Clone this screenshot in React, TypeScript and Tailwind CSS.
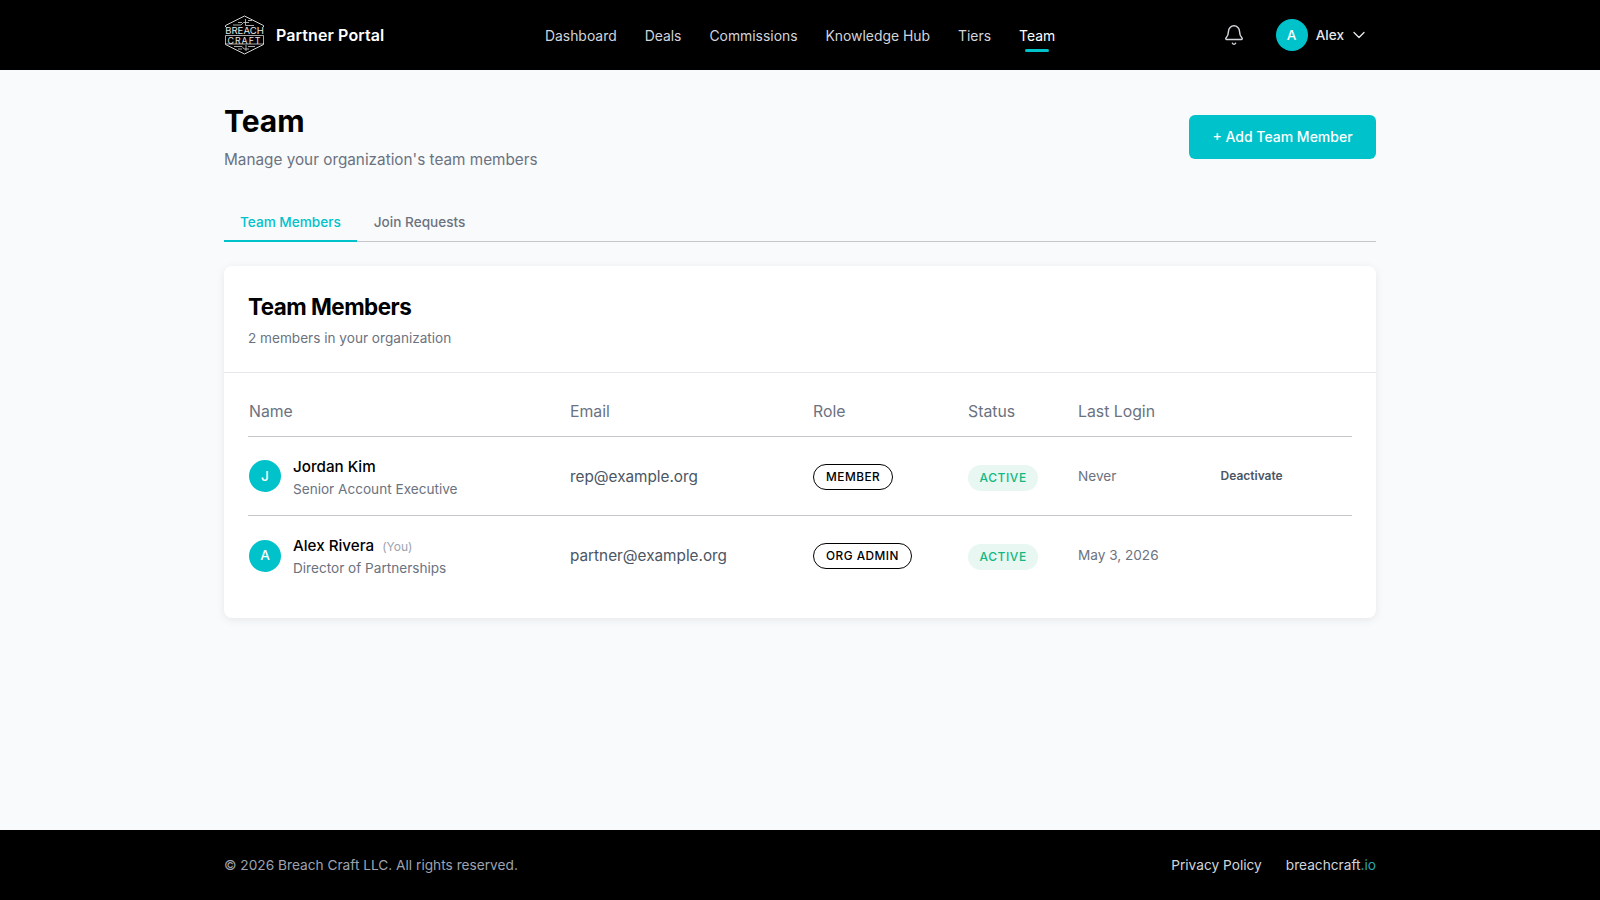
import { Bell, ChevronDown } from "lucide-react";

const nav = ["Dashboard", "Deals", "Commissions", "Knowledge Hub", "Tiers", "Team"];
const cols = "grid grid-cols-[322px_243px_155px_110px_142.5px_1fr]";

function Logo() {
  return (
    <div className="relative h-[40px] w-[41px] shrink-0">
      <svg viewBox="0 0 41 40" className="absolute inset-0 h-full w-full" fill="none" stroke="#d4d4d4" strokeWidth="1">
        <path d="M1.5 12 V10.5 L20.5 1 L39.5 10.5 V12" />
        <path d="M1.5 28 V29.5 L20.5 39 L39.5 29.5 V28" />
        <path d="M9 10 H17 L19.5 7.5 H25 M14 7.5 H18 M21.5 4 V10.5 H30 M24 5.5 H28" strokeWidth="0.8" />
        <path d="M10 31.5 H18 L20 34 H25 M14 34 H18 M22 30 V36 M24 31.5 H31" strokeWidth="0.8" />
        <path d="M1.5 20.5 H39.5 V29 H1.5 Z" strokeWidth="0.8" />
      </svg>
      <div className="absolute left-0 top-[11px] w-full text-center text-[9.6px] font-normal leading-[9px] text-[#e5e5e5]">BREACH</div>
      <div className="absolute left-0 top-[20.5px] w-full text-center text-[8.8px] font-normal leading-[9px] tracking-[1px] text-[#e5e5e5]">CRAFT</div>
    </div>
  );
}

function Avatar({ l }: { l: string }) {
  return (
    <div className="flex h-8 w-8 shrink-0 items-center justify-center rounded-full bg-[#00c2cb] text-[13.6px] font-medium text-white">{l}</div>
  );
}

function Active() {
  return (
    <span className="relative top-px inline-block rounded-full bg-[#e8f7f2] px-[11.5px] py-[5px] text-xs font-medium leading-4 tracking-[0.6px] text-[#10b981]">ACTIVE</span>
  );
}

function Role({ t }: { t: string }) {
  return (
    <span className="inline-block rounded-full border border-black bg-white px-3 py-1 text-[11.8px] font-medium leading-4 tracking-[0.5px] text-black">{t}</span>
  );
}

function Row({ l, name, you, title, email, role, login, action, last }: { l: string; name: string; you?: boolean; title: string; email: string; role: string; login: string; action?: boolean; last?: boolean }) {
  return (
    <div className={`${cols} h-[79px] items-center ${last ? "" : "border-b border-[#c4c6ca]"}`}>
      <div className="flex items-center gap-3 pl-px">
        <Avatar l={l} />
        <div>
          <div className="flex items-baseline pt-px leading-6 text-black">
            <span className="text-[15.2px] font-medium">{name}</span>
            {you && <span className="ml-2 text-xs text-[#9ca3af]">(You)</span>}
          </div>
          <div className="text-[13.6px] leading-5 text-[#6b7280]">{title}</div>
        </div>
      </div>
      <div className="pt-0.5 text-[15.3px] text-[#4b5563]">{email}</div>
      <div><Role t={role} /></div>
      <div><Active /></div>
      <div className="text-[13.6px] text-[#6b7280]">{login}</div>
      <div className="text-xs font-semibold text-[#4b5563]">{action ? "Deactivate" : ""}</div>
    </div>
  );
}

export default function App() {
  return (
    <div className="flex min-h-[900px] flex-col bg-[#f9fafc] font-['Inter',sans-serif]">
      <header className="h-[70px] bg-black">
        <div className="mx-auto flex h-full w-[1152px] items-center">
          <div className="flex w-[321px] items-center gap-[11px]">
            <Logo />
            <span className="text-base font-semibold tracking-[0.1px] text-white">Partner Portal</span>
          </div>
          <nav className="flex gap-7 pt-0.5">
            {nav.map((n) => (
              <span key={n} className={`relative text-[13.9px] font-normal ${n === "Team" ? "text-white" : "text-[#d1d5db]"}`}>
                {n}
                {n === "Team" && <span className="absolute -bottom-[6px] left-1/2 h-[3px] w-6 -translate-x-1/2 rounded-full bg-[#00c2cb]" />}
              </span>
            ))}
          </nav>
          <div className="ml-auto flex items-center pr-[7px]">
            <Bell className="mr-[31px] h-[22px] w-[22px] text-[#d1d5db]" strokeWidth={1.6} />
            <Avatar l="A" />
            <span className="ml-2 text-[13.6px] font-medium text-[#e5e7eb]">Alex</span>
            <ChevronDown className="ml-[5px] h-5 w-5 text-[#e5e7eb]" strokeWidth={1.6} />
          </div>
        </div>
      </header>
      <main className="mx-auto w-[1152px] flex-1 pt-8">
        <div className="flex items-start justify-between">
          <div>
            <h1 className="text-3xl font-bold leading-[38px] text-black">Team</h1>
            <p className="mt-2 text-[15.3px] leading-6 text-[#6b7280]">Manage your organization's team members</p>
          </div>
          <button className="mt-[13px] h-11 w-[187px] rounded-md bg-[#00c2cb] text-sm font-medium text-white">+ Add Team Member</button>
        </div>
        <div className="mt-[29px] flex border-b border-[#c4c6ca]">
          <div className="-mb-px border-b-2 border-[#00c2cb] px-4 pb-2 pt-[11px] text-[13.6px] font-medium leading-5 text-[#00c2cb]">Team Members</div>
          <div className="ml-px px-4 pb-2 pt-[11px] text-[13.6px] font-medium leading-5 text-[#6b7280]">Join Requests</div>
        </div>
        <div className="mt-6 rounded-lg bg-white shadow-[0_2px_8px_rgba(0,0,0,0.08)]">
          <div className="border-b border-[#e5e7eb] px-6 pb-6 pt-[25px]">
            <h2 className="text-[22.4px] font-bold leading-8 tracking-[-0.5px] text-black">Team Members</h2>
            <p className="mt-[5px] text-[13.6px] leading-5 text-[#6b7280]">2 members in your organization</p>
          </div>
          <div className="px-6 pb-[23px]">
            <div className={`${cols} h-[64px] items-center border-b border-[#c4c6ca] pt-[15px] text-[15.8px] font-normal text-[#6b7280]`}>
              <div className="pl-px">Name</div>
              <div>Email</div>
              <div>Role</div>
              <div>Status</div>
              <div>Last Login</div>
              <div />
            </div>
            <Row l="J" name="Jordan Kim" title="Senior Account Executive" email="rep@example.org" role="MEMBER" login="Never" action />
            <Row l="A" name="Alex Rivera" you title="Director of Partnerships" email="partner@example.org" role="ORG ADMIN" login="May 3, 2026" last />
          </div>
        </div>
      </main>
      <footer className="h-[70px] bg-black">
        <div className="mx-auto flex h-full w-[1152px] items-center justify-between text-[13.7px]">
          <span className="text-[#9ca3af]">© 2026 Breach Craft LLC. All rights reserved.</span>
          <div className="flex gap-6 text-[#d1d5db]">
            <span>Privacy Policy</span>
            <span>breachcraft<span className="text-[#2aa5ad]">.io</span></span>
          </div>
        </div>
      </footer>
    </div>
  );
}
